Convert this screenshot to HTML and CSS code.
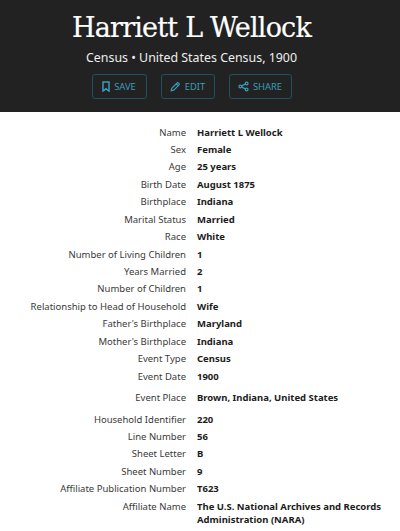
FILE: index.html
```html
<!DOCTYPE html>
<html lang="en">
<head>
  <meta charset="UTF-8">
  <meta name="viewport" content="width=device-width, initial-scale=1.0">
  <title>Harriett L Wellock</title>
  <link rel="stylesheet" href="styles.css">
</head>
<body>
  <header class="banner">
    <h1>Harriett L Wellock</h1>
    <p class="subtitle">Census • United States Census, 1900</p>
    <div class="actions">
      <a class="action save" href="#">
        <svg width="8" height="11" viewBox="0 0 8 11"><path d="M1 1h6v9L4 7.800 1 10z"/></svg>
        SAVE
      </a>
      <a class="action edit" href="#">
        <svg width="11" height="11" viewBox="0 0 14 14"><path d="M1.500 12.500l.8-3.300 6.700-6.700a1.200 1.200 0 0 1 1.700 0l.8.800a1.200 1.200 0 0 1 0 1.700l-6.700 6.700zM8 3.500l2.500 2.500"/></svg>
        EDIT
      </a>
      <a class="action share" href="#">
        <svg width="11" height="11" viewBox="0 0 14 14"><circle cx="3" cy="7" r="1.800"/><circle cx="11" cy="3.200" r="1.800"/><circle cx="11" cy="10.800" r="1.800"/><path d="M4.700 6.200l4.700-2.200M4.700 7.800l4.700 2.200"/></svg>
        SHARE
      </a>
    </div>
  </header>

  <div class="facts">
    <div class="fact"><span class="label">Name</span><span class="value">Harriett L Wellock</span></div>
    <div class="fact"><span class="label">Sex</span><span class="value">Female</span></div>
    <div class="fact"><span class="label">Age</span><span class="value">25 years</span></div>
    <div class="fact"><span class="label">Birth Date</span><span class="value">August 1875</span></div>
    <div class="fact"><span class="label">Birthplace</span><span class="value">Indiana</span></div>
    <div class="fact"><span class="label">Marital Status</span><span class="value">Married</span></div>
    <div class="fact"><span class="label">Race</span><span class="value">White</span></div>
    <div class="fact"><span class="label">Number of Living Children</span><span class="value">1</span></div>
    <div class="fact"><span class="label">Years Married</span><span class="value">2</span></div>
    <div class="fact"><span class="label">Number of Children</span><span class="value">1</span></div>
    <div class="fact"><span class="label">Relationship to Head of Household</span><span class="value">Wife</span></div>
    <div class="fact"><span class="label">Father's Birthplace</span><span class="value">Maryland</span></div>
    <div class="fact"><span class="label">Mother's Birthplace</span><span class="value">Indiana</span></div>
    <div class="fact"><span class="label">Event Type</span><span class="value">Census</span></div>
    <div class="fact"><span class="label">Event Date</span><span class="value">1900</span></div>
    <div class="fact place"><span class="label">Event Place</span><span class="value">Brown, Indiana, United States</span></div>
    <div class="fact"><span class="label">Household Identifier</span><span class="value">220</span></div>
    <div class="fact"><span class="label">Line Number</span><span class="value">56</span></div>
    <div class="fact"><span class="label">Sheet Letter</span><span class="value">B</span></div>
    <div class="fact"><span class="label">Sheet Number</span><span class="value">9</span></div>
    <div class="fact"><span class="label">Affiliate Publication Number</span><span class="value">T623</span></div>
    <div class="fact"><span class="label">Affiliate Name</span><span class="value">The U.S. National Archives and Records Administration (NARA)</span></div>
  </div>
</body>
</html>
```

FILE: styles.css
```css
body {
  margin: 0;
  background-color: #fff;
  font-family: "Noto Sans", sans-serif;
  overflow: hidden;
}

/* content sits 17px short of the right edge */
.banner {
  height: 112px;
  box-sizing: border-box;
  padding: 11px 17px 0 0;
  background-color: #222;
  color: #fff;
  text-align: center;
}

.banner h1 {
  margin: 0;
  font-family: "DejaVu Serif", serif;
  font-size: 27px;
  font-weight: normal;
  line-height: 34px;
  letter-spacing: -0.8px;
  -webkit-text-stroke: 0.2px #fff;
}

.subtitle {
  margin: 3px 0 0;
  font-size: 12.400px;
  line-height: 19px;
  color: #eee;
}

.actions {
  display: flex;
  justify-content: center;
  gap: 14px;
  margin-top: 7px;
}

.action {
  display: flex;
  align-items: center;
  justify-content: center;
  gap: 4px;
  height: 25px;
  box-sizing: border-box;
  border: 1px solid #1f5260;
  border-radius: 3px;
  color: #3a9cb8;
  font-size: 9.400px;
  text-decoration: none;
}

.action svg {
  fill: none;
  stroke: #3a9cb8;
  stroke-width: 1.500;
}

.save { width: 55px; }
.edit { width: 54px; }
.share { width: 63px; }

.facts {
  padding: 13.500px 17px 0 0;
  font-size: 9.500px;
  line-height: 13px;
}

.fact {
  display: grid;
  grid-template-columns: 186px 1fr;
  column-gap: 11px;
  padding-bottom: 4.450px;
}

.place {
  padding: 4px 0 8.500px;
}

.label {
  text-align: right;
  color: #3a3a3a;
}

.value {
  font-weight: bold;
  color: #1c1c1c;
}
```
